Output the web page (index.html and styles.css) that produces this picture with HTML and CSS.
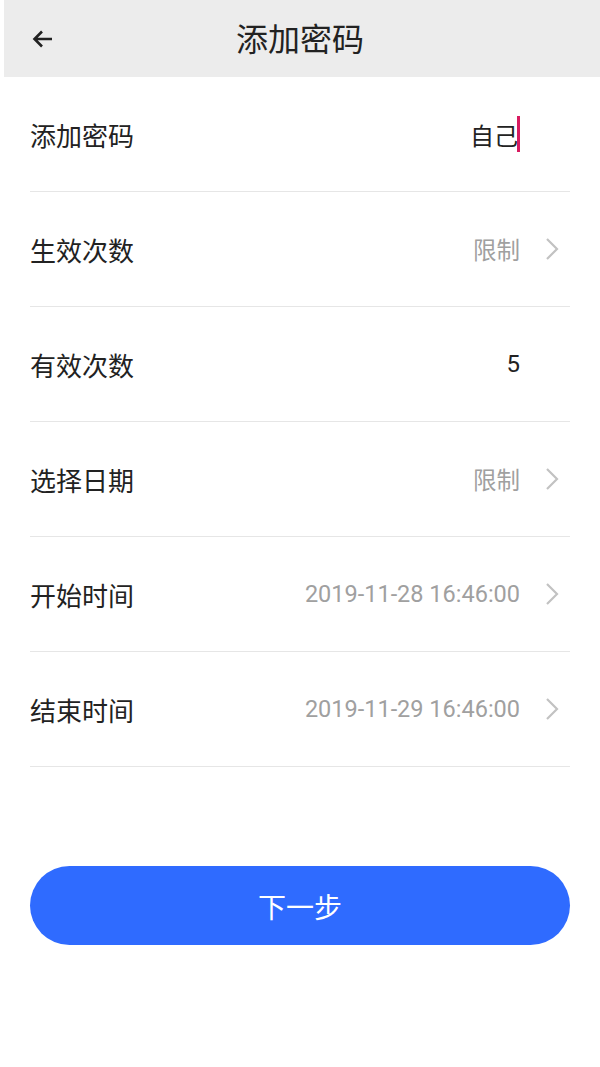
FILE: index.html
```html
<!DOCTYPE html>
<html lang="zh-CN">
<head>
    <meta charset="UTF-8">
    <meta name="viewport" content="width=device-width, initial-scale=1.0">
    <title>添加密码</title>
    <link rel="stylesheet" href="styles.css">
</head>
<body>
    <div class="header">
        <span class="back">
            <svg width="22" height="20" viewBox="0 0 22 20">
                <path d="M20 10H3M10 2.5L2.5 10 10 17.5" fill="none" stroke="#222" stroke-width="2.6" stroke-linecap="butt"/>
            </svg>
        </span>
        <h1>添加密码</h1>
    </div>

    <div class="list">
        <div class="row">
            <span class="label">添加密码</span>
            <span class="value strong">自己<i class="caret"></i></span>
            <span class="arrow"></span>
        </div>
        <div class="row">
            <span class="label">生效次数</span>
            <span class="value">限制</span>
            <span class="arrow"><svg width="14" height="24" viewBox="0 0 14 24"><path d="M2 2l10 10L2 22" fill="none" stroke="#c2c2c2" stroke-width="2.2"/></svg></span>
        </div>
        <div class="row">
            <span class="label">有效次数</span>
            <span class="value strong">5</span>
            <span class="arrow"></span>
        </div>
        <div class="row">
            <span class="label">选择日期</span>
            <span class="value">限制</span>
            <span class="arrow"><svg width="14" height="24" viewBox="0 0 14 24"><path d="M2 2l10 10L2 22" fill="none" stroke="#c2c2c2" stroke-width="2.2"/></svg></span>
        </div>
        <div class="row">
            <span class="label">开始时间</span>
            <span class="value">2019-11-28 16:46:00</span>
            <span class="arrow"><svg width="14" height="24" viewBox="0 0 14 24"><path d="M2 2l10 10L2 22" fill="none" stroke="#c2c2c2" stroke-width="2.2"/></svg></span>
        </div>
        <div class="row">
            <span class="label">结束时间</span>
            <span class="value">2019-11-29 16:46:00</span>
            <span class="arrow"><svg width="14" height="24" viewBox="0 0 14 24"><path d="M2 2l10 10L2 22" fill="none" stroke="#c2c2c2" stroke-width="2.2"/></svg></span>
        </div>
    </div>

    <div class="actions">
        <button class="next">下一步</button>
    </div>
</body>
</html>
```

FILE: styles.css
```css
body {
    font-family: Roboto, "Noto Sans CJK SC", sans-serif;
    margin: 0;
    padding: 0;
    background: #fff;
    color: #222;
}

.header {
    margin-left: 4px;
    height: 77px;
    background: #ececec;
    display: flex;
    align-items: center;
    justify-content: center;
    position: relative;
}

.back {
    position: absolute;
    left: 28px;
    top: 29px;
    display: flex;
}

.header h1 {
    margin: 0 4px 4px 0;
    font-size: 32px;
    font-weight: normal;
    color: #222;
}

.list {
    padding: 0 30px;
}

.row {
    height: 114px;
    border-bottom: 1px solid #e6e6e6;
    display: flex;
    align-items: center;
}

.label {
    flex: 1;
    font-size: 26px;
    color: #222;
}

.value {
    font-size: 23.5px;
    color: #a0a0a0;
    display: flex;
    align-items: center;
}

.value.strong {
    font-size: 24px;
    color: #222;
}

.caret {
    display: inline-block;
    width: 3px;
    height: 36px;
    background: #d81b60;
    margin-left: -1px;
}

.arrow {
    width: 50px;
    display: flex;
    justify-content: flex-end;
    padding-right: 11px;
    box-sizing: border-box;
}

.actions {
    padding: 99px 30px 0;
}

.next {
    width: 100%;
    height: 79px;
    border: none;
    border-radius: 40px;
    background: #2f6bff;
    color: #fff;
    font-family: inherit;
    font-size: 28px;
    cursor: pointer;
}
```
